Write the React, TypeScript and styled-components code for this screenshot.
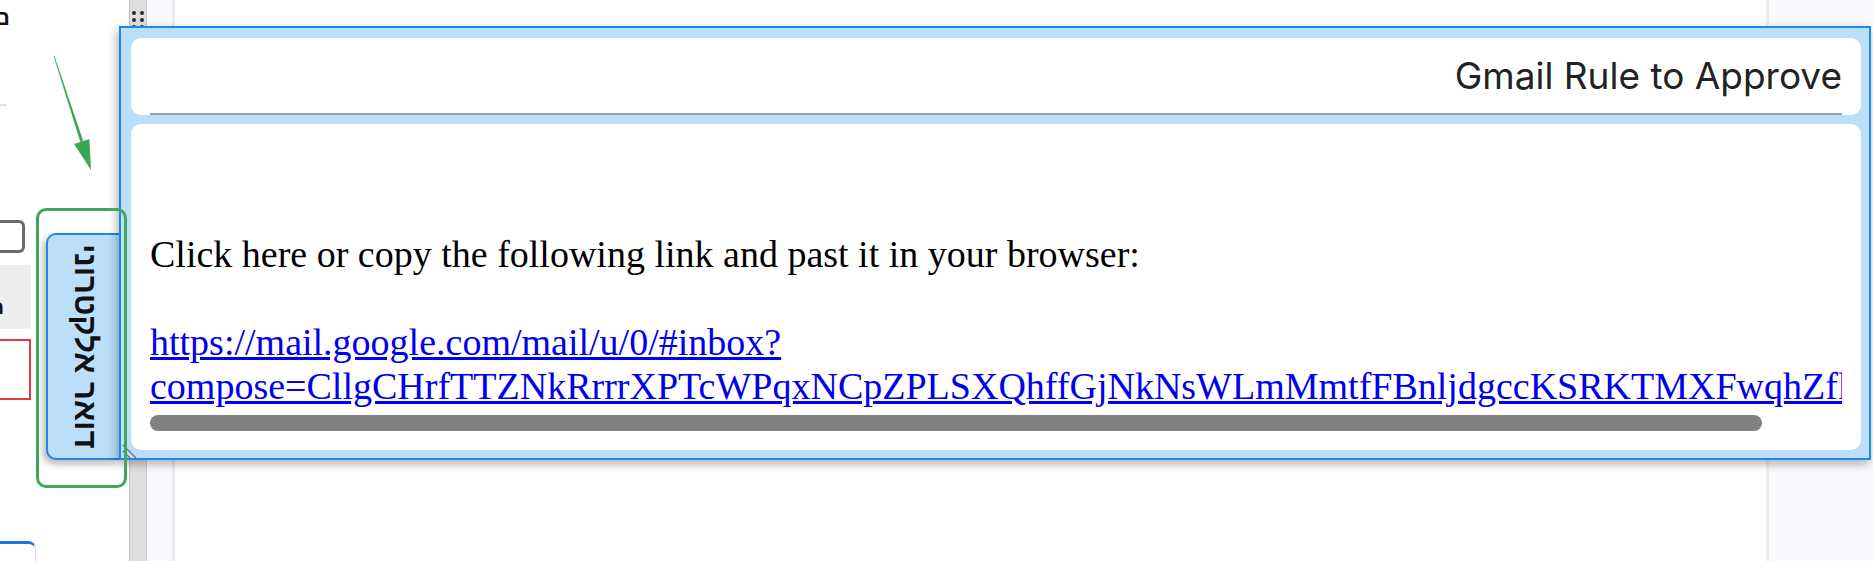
import React from "react";
import styled, { createGlobalStyle } from "styled-components";

const GlobalStyle = createGlobalStyle`
  html, body { margin: 0; padding: 0; width: 100%; height: 100%; overflow: hidden; background: #fff; }
  #root { height: 100%; }
`;

const Page = styled.div`
  position: relative;
  display: flex;
  width: 1873px;
  height: 561px;
  overflow: hidden;
  background: #fff;
  font-family: "Liberation Sans", Arial, sans-serif;
`;

/* ---------- left (cut-off) panel ---------- */
const SidePanel = styled.aside`
  width: 129px;
  flex: none;
  overflow: hidden;
  display: flex;
  flex-direction: column;
  align-items: flex-start;
  & > * { flex: none; }
`;

const HeadGlyph = styled.div`
  margin-top: 6px;
  margin-left: -6px;
  height: 24px;
  font: 700 22px/24px "Liberation Sans", "DejaVu Sans", sans-serif;
  color: #111;
`;

const ThinRule = styled.div`
  margin-top: 74px;
  width: 7px;
  height: 2px;
  background: #e2e2e2;
`;

const CheckBox = styled.div`
  margin-top: 114px;
  margin-left: -9px;
  width: 34px;
  height: 33px;
  box-sizing: border-box;
  border: 3px solid #6a6a6a;
  border-radius: 6px;
`;

const GreyRow = styled.div`
  margin-top: 12px;
  width: 31px;
  height: 64px;
  background: #eeeeee;
  display: flex;
  align-items: flex-end;
  padding-bottom: 12px;
  box-sizing: border-box;
`;

const RowGlyph = styled.span`
  margin-left: -10px;
  font: 700 20px/20px "Liberation Sans", "DejaVu Sans", sans-serif;
  color: #111;
`;

const RedField = styled.div`
  margin-top: 10px;
  width: 31px;
  height: 61px;
  box-sizing: border-box;
  border: 2px solid #e0393e;
  border-left: none;
`;

const BlueCard = styled.div`
  margin-top: 141px;
  width: 36px;
  height: 30px;
  box-sizing: border-box;
  border-top: 3px solid #1a73e8;
  border-right: 1px solid #dadce0;
  border-top-right-radius: 8px;
  background: #fff;
`;

/* ---------- splitter & nav strip ---------- */
const Splitter = styled.div`
  width: 18px;
  flex: none;
  box-sizing: border-box;
  background: #dedede;
  border-left: 1px solid #c4c4c4;
  border-right: 1px solid #cdcdcd;
  display: flex;
  justify-content: center;
  padding-top: 11px;
`;

const GripDots = styled.div`
  display: grid;
  grid-template-columns: 4px 4px;
  grid-auto-rows: 4px;
  column-gap: 4px;
  row-gap: 3px;
  align-content: start;
`;

const Dot = styled.span`
  width: 4px;
  height: 4px;
  border-radius: 50%;
  background: #2b2b2b;
`;

const NavStrip = styled.div`
  width: 28px;
  flex: none;
  box-sizing: border-box;
  background: #f8f9fc;
  border-right: 3px solid #ececec;
`;

const MainArea = styled.main`
  flex: 1;
  background: #fff;
`;

const RightGutter = styled.div`
  width: 107px;
  flex: none;
  box-sizing: border-box;
  background: #f8f9fc;
  border-left: 3px solid #ededed;
`;

/* ---------- floating dialog ---------- */
const Overlay = styled.div`
  position: absolute;
  left: 46px;
  top: 26px;
  display: flex;
  align-items: flex-end;
  z-index: 2;
`;

const SideTab = styled.button`
  all: unset;
  box-sizing: border-box;
  width: 73px;
  height: 227px;
  background: #bbdefb;
  border: 2px solid #1e88e5;
  border-right: none;
  border-radius: 10px 0 0 10px;
  box-shadow: -3px 4px 7px rgba(0, 0, 0, 0.28);
  display: flex;
  align-items: center;
  justify-content: center;
`;

const TabLabel = styled.span`
  writing-mode: vertical-rl;
  font-family: "Liberation Sans", "DejaVu Sans", sans-serif;
  font-weight: 700;
  font-size: 31px;
  color: #111;
  white-space: nowrap;
  margin-left: 2px;
`;

const Dialog = styled.div`
  position: relative;
  box-sizing: border-box;
  width: 1752px;
  height: 434px;
  background: #bbdefb;
  border: 2px solid #1e88e5;
  box-shadow: -2px 4px 9px rgba(0, 0, 0, 0.3);
  padding: 10px 8px 8px 10px;
  display: flex;
  flex-direction: column;
  gap: 9px;
`;

const TitleCard = styled.header`
  height: 77px;
  flex: none;
  box-sizing: border-box;
  background: #fff;
  border-radius: 10px;
  padding: 0 19px;
`;

const TitleBar = styled.div`
  height: 100%;
  box-sizing: border-box;
  border-bottom: 2px solid #9e9e9e;
  display: flex;
  justify-content: flex-end;
  align-items: flex-start;
  padding-top: 15px;
`;

const Title = styled.h2`
  margin: 0;
  font-family: Inter, "Liberation Sans", sans-serif;
  font-weight: 400;
  font-size: 37px;
  line-height: normal;
  color: #222;
`;

const BodyCard = styled.section`
  flex: 1;
  min-height: 0;
  min-width: 0;
  box-sizing: border-box;
  background: #fff;
  border-radius: 10px;
  padding: 20px 19px 19px;
  font-family: "Liberation Serif", "Times New Roman", serif;
  font-size: 38px;
  line-height: 44px;
  color: #000;
  display: flex;
  flex-direction: column;
`;

const Spacer = styled.div<{ $lines: number }>`
  flex: none;
  height: ${(p) => p.$lines * 44}px;
`;

const Para = styled.p`
  margin: 0;
  white-space: nowrap;
`;

const LinkViewport = styled.div`
  flex: none;
  overflow: hidden;
  white-space: nowrap;
`;

const MailLink = styled.a`
  color: #0000ee;
  text-decoration: underline;
`;

const ScrollTrack = styled.div`
  flex: none;
  margin-top: 7px;
  height: 16px;
`;

const ScrollThumb = styled.div<{ $ratio: number }>`
  height: 100%;
  width: ${(p) => p.$ratio * 100}%;
  background: #808080;
  border-radius: 8px;
`;

const ResizeGrip = styled.svg`
  position: absolute;
  left: 1px;
  bottom: 0;
`;

/* ---------- annotations ---------- */
const Highlight = styled.div`
  position: absolute;
  left: 36px;
  top: 208px;
  width: 91px;
  height: 280px;
  box-sizing: border-box;
  border: 3px solid #3ea85a;
  border-radius: 10px;
  z-index: 3;
  pointer-events: none;
`;

const ArrowSvg = styled.svg`
  position: absolute;
  left: 0;
  top: 0;
  z-index: 3;
  pointer-events: none;
`;

const url1 = "https://mail.google.com/mail/u/0/#inbox?";
const url2 =
  "compose=CllgCHrfTTZNkRrrrXPTcWPqxNCpZPLSXQhffGjNkNsWLmMmtfFBnljdgccKSRKTMXFwqhZfkLbQ";

export default function App() {
  return (
    <>
      <GlobalStyle />
      <Page>
        <SidePanel>
          <HeadGlyph>ם</HeadGlyph>
          <ThinRule />
          <CheckBox />
          <GreyRow>
            <RowGlyph>ח</RowGlyph>
          </GreyRow>
          <RedField />
          <BlueCard />
        </SidePanel>
        <Splitter>
          <GripDots>
            {Array.from({ length: 6 }).map((_, i) => (
              <Dot key={i} />
            ))}
          </GripDots>
        </Splitter>
        <NavStrip />
        <MainArea />
        <RightGutter />

        <Overlay>
          <SideTab>
            <TabLabel dir="rtl">דואר אלקטרוני</TabLabel>
          </SideTab>
          <Dialog>
            <TitleCard>
              <TitleBar>
                <Title>Gmail Rule to Approve</Title>
              </TitleBar>
            </TitleCard>
            <BodyCard>
              <Spacer $lines={2} />
              <Para>Click here or copy the following link and past it in your browser:</Para>
              <Spacer $lines={1} />
              <LinkViewport>
                <MailLink href="#">
                  {url1}
                  <br />
                  {url2}
                </MailLink>
              </LinkViewport>
              <ScrollTrack>
                <ScrollThumb $ratio={1612 / 1692} />
              </ScrollTrack>
            </BodyCard>
            <ResizeGrip width="16" height="16" viewBox="0 0 16 16">
              <line x1="1" y1="3" x2="14" y2="16" stroke="#6f6f6f" strokeWidth="1.2" />
              <line x1="1" y1="9" x2="8" y2="16" stroke="#6f6f6f" strokeWidth="1.2" />
            </ResizeGrip>
          </Dialog>
        </Overlay>

        <Highlight />
        <ArrowSvg width="140" height="200" viewBox="0 0 140 200">
          <polygon points="54.4,55.9 53.6,56.1 80.3,141.9 83.2,141" fill="#3aa757" />
          <polygon points="89.4,139 74.1,143.9 91,170" fill="#3aa757" />
        </ArrowSvg>
      </Page>
    </>
  );
}
